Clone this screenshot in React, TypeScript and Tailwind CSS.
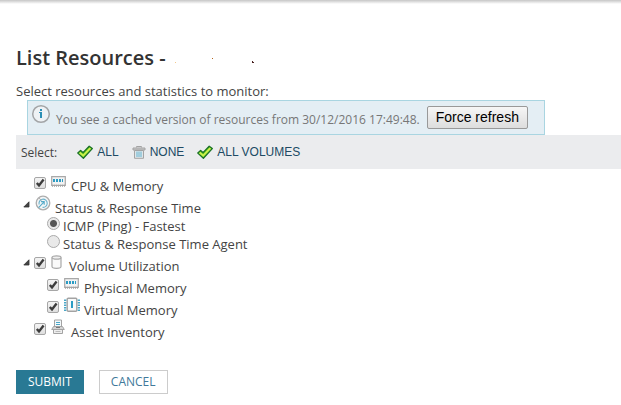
import React, { useState } from 'react';

const InfoIcon = () => (
  <svg width="20" height="20" viewBox="0 0 20 20" fill="none">
    <circle cx="10" cy="10" r="8.3" fill="#eef2f5" stroke="#a3a5a7" strokeWidth="1.5" />
    <path d="M9 5h2v2H9zM8 8h3v6H9V9H8z" fill="#2c8fb5" />
  </svg>
);

const CheckIcon = () => (
  <svg width="16" height="16" viewBox="0 0 16 16">
    <path d="M0.8 9 3.6 6.4 6 8.6 12.2 2.2 15.3 4.6 6.4 14.2z" fill="#43b51c" stroke="#1c7426" strokeWidth="1.3" strokeLinejoin="round" />
    <path d="M2.6 8.6 6.2 11.6 13.4 4" stroke="#c9f04a" strokeWidth="2" fill="none" />
  </svg>
);

const TrashIcon = () => (
  <svg width="14" height="14" viewBox="0 0 14 14" fill="none">
    <path d="M4.5 2.5v-1h5v1" stroke="#a3a3a3" />
    <path d="M1 3h12v2H1z" fill="#c9c9c9" stroke="#a3a3a3" />
    <path d="M2.5 5.5h9v7.8h-9z" fill="#dfe6e9" stroke="#a3a3a3" />
    <path d="M5 6.5v5.5M7 6.5v5.5M9 6.5v5.5" stroke="#79bdd5" strokeWidth="1.2" />
  </svg>
);

const MemoryIcon = () => (
  <svg width="15" height="12" viewBox="0 0 15 12" fill="none">
    <path d="M0.7 0.7h13.6v8.6H0.7z" fill="#f3f3f3" stroke="#a8a8a8" strokeWidth="1.2" />
    <path d="M2 3h2v3H2zM5 3h2v3H5zM8 3h2v3H8zM11 3h1v3h-1z" fill="#2c9cc4" />
    <path d="M1 9.8h13" stroke="#a3a3a3" strokeWidth="2" strokeDasharray="1 1" />
  </svg>
);

const ResponseIcon = () => (
  <svg width="16" height="16" viewBox="0 0 16 16" fill="none">
    <circle cx="8" cy="8" r="6.8" fill="#f4f6f7" stroke="#adadad" strokeWidth="1.3" />
    <path d="M4.2 9.5a4.1 4.1 0 1 1 3.3 2.8" stroke="#6bb2cb" strokeWidth="1.1" />
    <path d="M3.6 12.6 8.8 7.2M6 6.6h3.2v3.2" stroke="#55abc9" strokeWidth="1.1" />
    <path d="M4 3.2l2.6 2.2" stroke="#adadad" />
  </svg>
);

const VolumeIcon = () => (
  <svg width="11" height="14" viewBox="0 0 11 14" fill="none" stroke="#a8a8a8" strokeWidth="1.2">
    <path d="M1 2.5v9c0 2.4 9 2.4 9 0v-9" fill="#fafafa" />
    <ellipse cx="5.5" cy="2.5" rx="4.5" ry="1.7" fill="#f0f0f0" />
  </svg>
);

const VirtualIcon = () => (
  <svg width="16" height="16" viewBox="0 0 16 16" fill="none">
    <path d="M1.2 2.5v11.5M14.8 2.5v11.5" stroke="#4ba7c7" strokeWidth="2.4" strokeDasharray="1.4 1.1" />
    <rect x="3.2" y="1.2" width="9.6" height="13" rx="1" fill="#fafafa" stroke="#a3a3a3" strokeWidth="1.4" />
    <path d="M8 4v7" stroke="#2c9cc4" strokeWidth="2" />
  </svg>
);

const AssetIcon = () => (
  <svg width="14" height="16" viewBox="0 0 14 16" fill="none" stroke="#a3a3a3">
    <path d="M3.5 8V1h7v7" fill="#f3f8fa" />
    <path d="M5 3.5h4M5 5.5h4" stroke="#4ba7c7" />
    <path d="M2.5 7.5 0.7 10.5h12.6L11.5 7.5z" fill="#d4d4d4" />
    <path d="M5 8.5h4" stroke="#777" />
    <path d="M2.5 11v3.5h9V11" fill="#eee" />
    <path d="M4.5 12.5h5" stroke="#bbb" />
  </svg>
);

const Arrow = () => (
  <svg width="7" height="7" viewBox="0 0 7 7">
    <path d="M6 0.8v5.2h-5.2z" fill="#444" stroke="#333" strokeWidth="0.8" />
  </svg>
);

const Checkbox = ({ id }: { id: string }) => {
  const [checked, setChecked] = useState(true);

  return (
    <span className="grid w-3 h-3 shrink-0">
      <input
        id={id}
        type="checkbox"
        checked={checked}
        onChange={() => setChecked(!checked)}
        className="appearance-none col-start-1 row-start-1 w-3 h-3 rounded-xs border border-[#a6a6a6] bg-linear-to-b from-[#f4f4f4] to-[#dedede]"
      />
      {checked && (
        <svg viewBox="0 0 12 12" className="col-start-1 row-start-1 w-3 h-3 pointer-events-none">
          <path d="M2.8 6 5 8.4 9.6 2.6" stroke="#3c3c3c" strokeWidth="2.4" fill="none" />
        </svg>
      )}
    </span>
  );
};

const bulkActions = [
  { label: 'ALL', icon: <CheckIcon /> },
  { label: 'NONE', icon: <TrashIcon /> },
  { label: 'ALL VOLUMES', icon: <CheckIcon /> }
];

const pollingMethods = [
  { id: 'icmp', label: 'ICMP (Ping) - Fastest' },
  { id: 'agent', label: 'Status & Response Time Agent' }
];

const rowClass = 'flex items-start h-[22px]';
const labelClass = 'pt-1 leading-[18px]';

const App = () => {
  const [method, setMethod] = useState('icmp');

  return (
    <div className="bg-white font-['Open_Sans','Noto_Sans',sans-serif] text-[13px] text-[#444]">
      <div className="h-1 bg-linear-to-b from-[#c6c6c6] to-white" />

      <main className="pl-4 pt-10">
        <h1 className="flex items-center text-xl leading-7 font-semibold text-[#333]">
          List Resources -
          <svg width="86" height="12" viewBox="0 0 86 12" className="ml-2">
            <path d="M1 10h1v1H1z" fill="#f3c98d" />
            <path d="M38 6h1v1h-1z" fill="#b5651d" />
            <path d="M78 9h1v1h1v1h-2z" fill="#4a2020" />
          </svg>
        </h1>

        <p className="mt-2.5 leading-[18px]">Select resources and statistics to monitor:</p>

        <div className="flex items-center ml-[11px] w-fit h-[35px] pl-[3px] pr-4 border border-[#a9d5e1] bg-[#e4eef4] text-xs text-[#777]">
          <span className="self-start pt-[3px]"><InfoIcon /></span>
          <span className="ml-[5px] pt-1">You see a cached version of resources from 30/12/2016 17:49:48.</span>
          <button
            type="button"
            className="ml-[7px] h-[23px] px-2 pb-0.5 border border-[#999] rounded-xs bg-linear-to-b from-[#f6f6f6] to-[#dddddd] font-['Liberation_Sans',Arial,sans-serif] text-sm leading-5 text-black"
          >
            Force refresh
          </button>
        </div>

        <div className="flex items-center h-[34px] pl-[5px] bg-[#ebecee] text-xs">
          <span className="mr-5 pt-0.5">Select:</span>
          <div className="flex gap-[13px]">
            {bulkActions.map((action) => (
              <button
                key={action.label}
                type="button"
                className="flex items-center gap-1 font-['Liberation_Sans',Arial,sans-serif] text-xs text-[#204a63]"
              >
                {action.icon}
                {action.label}
              </button>
            ))}
          </div>
        </div>

        <div className="pt-1">
          <div className={`${rowClass} pl-[18px]`}>
            <span className="pt-1"><Checkbox id="cpu" /></span>
            <span className="ml-[5px] pt-[3px]"><MemoryIcon /></span>
            <label htmlFor="cpu" className={`${labelClass} ml-[5px]`}>CPU &amp; Memory</label>
          </div>

          <div className={`${rowClass} pl-[7px]`}>
            <span className="pt-1.5"><Arrow /></span>
            <span className="ml-[5px]"><ResponseIcon /></span>
            <span className={`${labelClass} ml-1`}>Status &amp; Response Time</span>
          </div>

          {pollingMethods.map((item) => (
            <div key={item.id} className="flex items-start h-[18px] pl-[31px]">
              <input
                id={item.id}
                type="radio"
                name="polling"
                checked={method === item.id}
                onChange={() => setMethod(item.id)}
                className="appearance-none w-[13px] h-[13px] rounded-full border border-[#aaa] bg-[#e9e9e9] checked:bg-[radial-gradient(circle,#555_0_3px,#e9e9e9_4px)]"
              />
              <label htmlFor={item.id} className="ml-[3px] leading-[18px]">{item.label}</label>
            </div>
          ))}

          <div className={`${rowClass} pl-[7px]`}>
            <span className="pt-1.5"><Arrow /></span>
            <span className="ml-1 pt-1"><Checkbox id="volume" /></span>
            <span className="ml-[5px] pt-0.5"><VolumeIcon /></span>
            <label htmlFor="volume" className={`${labelClass} ml-[7px]`}>Volume Utilization</label>
          </div>

          <div className={`${rowClass} pl-[31px]`}>
            <span className="pt-1"><Checkbox id="physical" /></span>
            <span className="ml-[5px] pt-[3px]"><MemoryIcon /></span>
            <label htmlFor="physical" className={`${labelClass} ml-[5px]`}>Physical Memory</label>
          </div>

          <div className={`${rowClass} pl-[31px]`}>
            <span className="pt-1"><Checkbox id="virtual" /></span>
            <span className="ml-[5px]"><VirtualIcon /></span>
            <label htmlFor="virtual" className={`${labelClass} ml-1`}>Virtual Memory</label>
          </div>

          <div className={`${rowClass} pl-[18px]`}>
            <span className="pt-1"><Checkbox id="asset" /></span>
            <span className="ml-[5px]"><AssetIcon /></span>
            <label htmlFor="asset" className={`${labelClass} ml-1.5`}>Asset Inventory</label>
          </div>
        </div>

        <div className="flex gap-[15px] pt-[29px] text-xs">
          <button type="button" className="h-6 px-3 bg-[#297994] text-white">SUBMIT</button>
          <button type="button" className="h-6 px-[11px] border border-[#ccc] bg-white text-[#41799a]">CANCEL</button>
        </div>
      </main>
    </div>
  );
};

export default App;
